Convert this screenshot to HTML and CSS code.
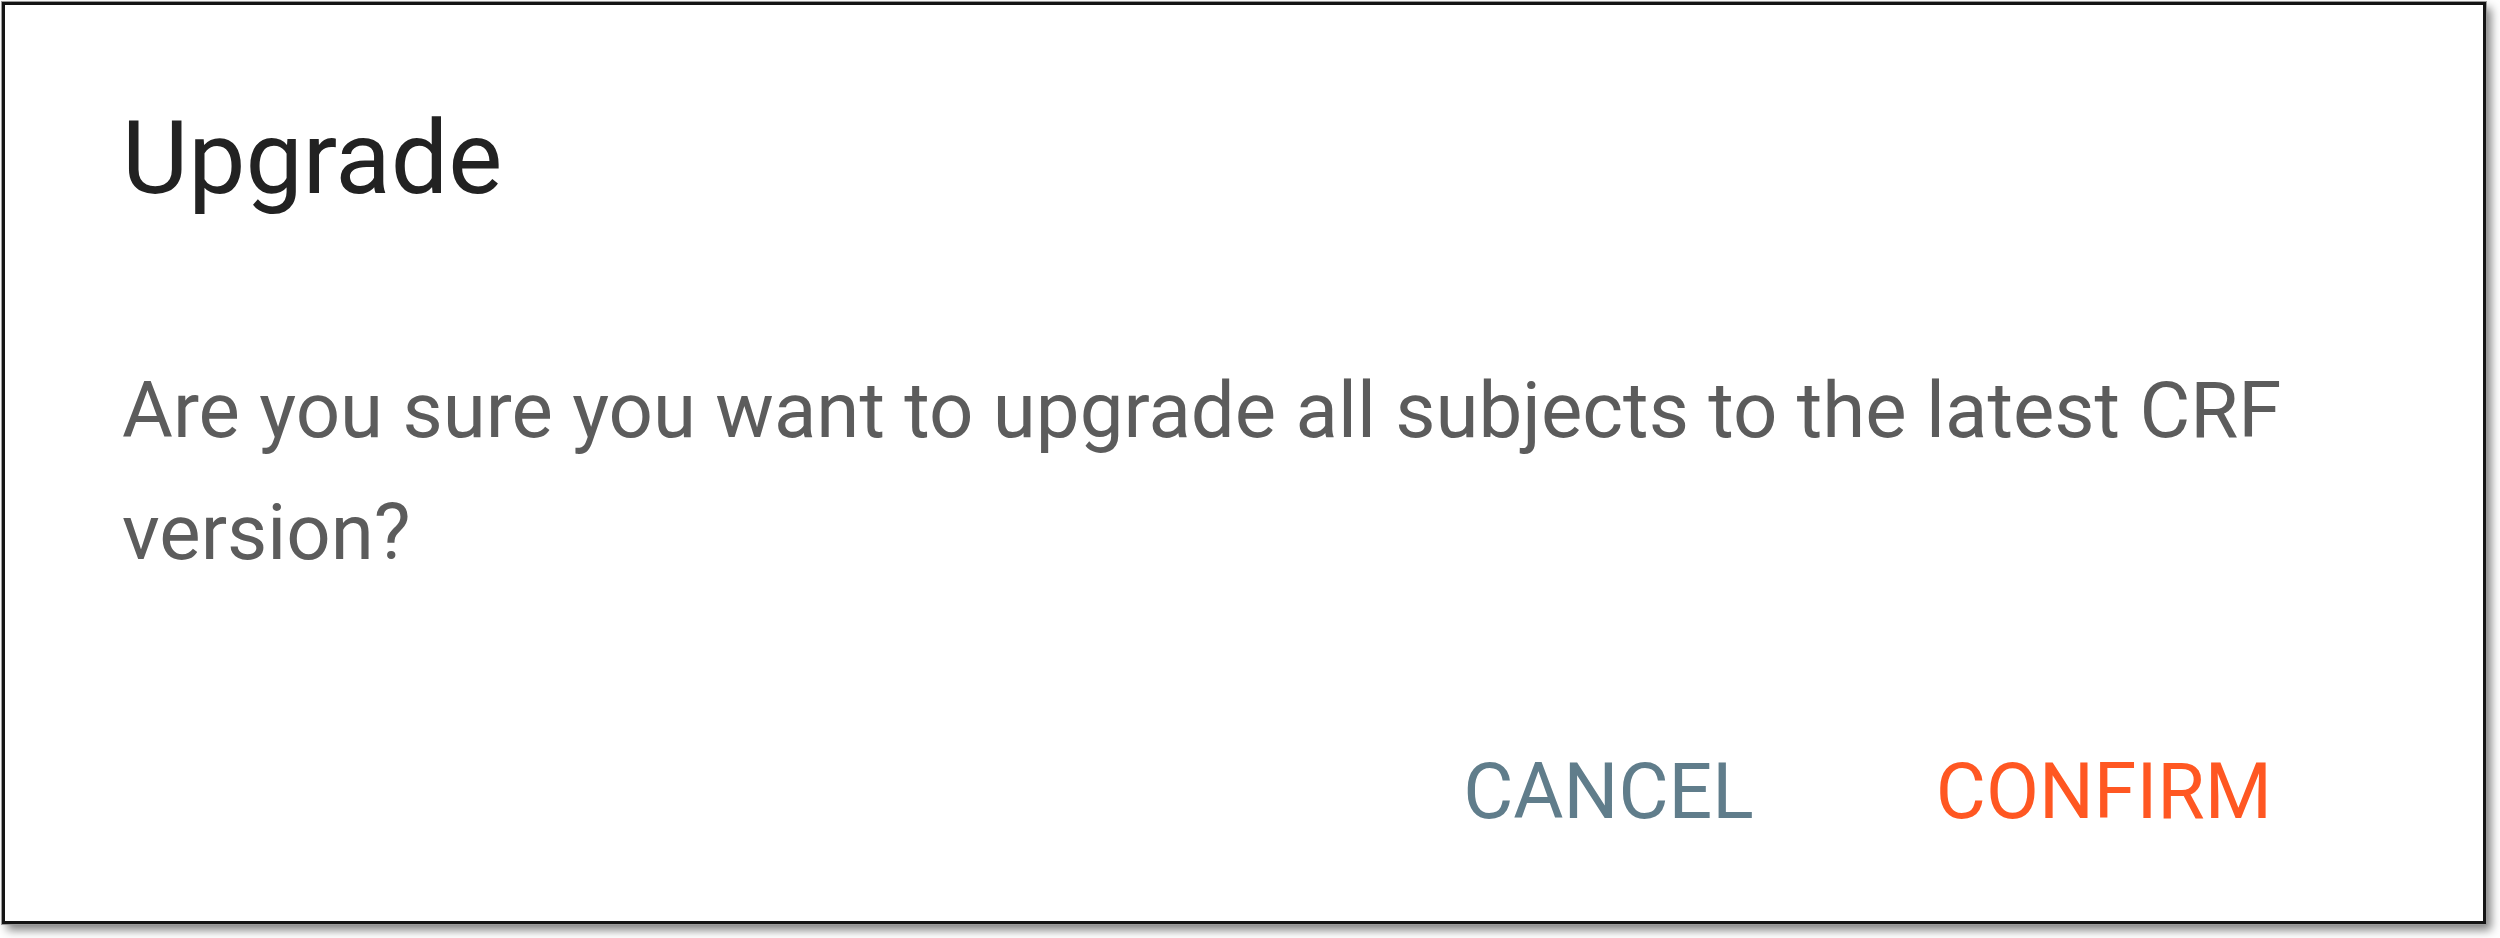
FILE: index.html
```html
<!DOCTYPE html>
<html lang="en">
<head>
<meta charset="utf-8">
<title>Upgrade</title>
<link rel="stylesheet" href="styles.css">
</head>
<body>
<div class="dialog">
  <h2 class="dialog-title">Upgrade</h2>
  <p class="dialog-body">Are you sure you want to upgrade all subjects to the latest CRF version?</p>
  <div class="dialog-actions">
    <button class="btn btn-cancel" type="button">Cancel</button>
    <button class="btn btn-confirm" type="button">Confirm</button>
  </div>
</div>
</body>
</html>
```
FILE: styles.css
```css
html, body {
  margin: 0;
  padding: 0;
  background: #ffffff;
}

body {
  width: 2500px;
  height: 938px;
  overflow: hidden;
  font-family: Roboto, "Liberation Sans", Arial, sans-serif;
}

.dialog {
  box-sizing: border-box;
  margin: 2px 0 0 2px;
  width: 2484px;
  height: 922px;
  border: 3px solid #141414;
  background: #ffffff;
  box-shadow: 0 0 0 1px #9a9a9a, 5px 6px 9px rgba(0, 0, 0, 0.5);
  padding: 93px 120px 0 117px;
  display: flex;
  flex-direction: column;
}

.dialog-title {
  margin: 0;
  font-size: 102px;
  line-height: 120px;
  font-weight: 400;
  color: #222222;
}

.dialog-body {
  margin: 132px 0 0 0;
  font-size: 78px;
  line-height: 122px;
  font-weight: 400;
  color: #5c5c5c;
}

.dialog-actions {
  margin-top: 148px;
  margin-right: 91px;
  display: flex;
  justify-content: flex-end;
  gap: 182px;
}

.btn {
  border: none;
  background: transparent;
  padding: 0;
  margin: 0;
  font-family: Roboto, "Liberation Sans", Arial, sans-serif;
  font-size: 77px;
  line-height: 100px;
  font-weight: 400;
  text-transform: uppercase;
  cursor: pointer;
}

.btn-cancel {
  color: #607d8b;
}

.btn-confirm {
  color: #ff5722;
}
```
